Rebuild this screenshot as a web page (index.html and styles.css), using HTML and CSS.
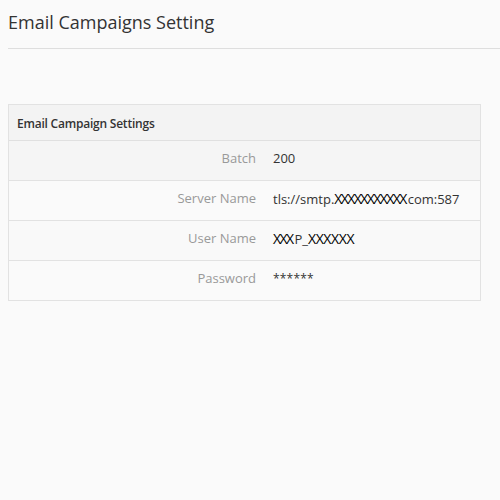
FILE: index.html
```html
<!DOCTYPE html>
<html>
<head>
<meta charset="utf-8">
<link rel="stylesheet" href="styles.css">
</head>
<body>
<div class="page">
  <h1 class="title">Email Campaigns Setting</h1>
  <div class="panel">
    <div class="panel-head">Email Campaign Settings</div>
    <div class="row stripe">
      <div class="label">Batch</div>
      <div class="value">200</div>
    </div>
    <div class="row">
      <div class="label">Server Name</div>
      <div class="value">tls://smtp.<span class="redact">XXXXXXXXXXX</span>com:587</div>
    </div>
    <div class="row stripe2">
      <div class="label">User Name</div>
      <div class="value"><span class="redact">XXX</span>P_<span class="redact wide">XXXXXX</span></div>
    </div>
    <div class="row">
      <div class="label">Password</div>
      <div class="value pw">******</div>
    </div>
  </div>
</div>
</body>
</html>
```

FILE: styles.css
```css
html, body {
  margin: 0;
  padding: 0;
  background: #fafafa;
}
body {
  font-family: "Open Sans", "Liberation Sans", sans-serif;
  color: #333;
}
.page {
  padding: 8px 0 0 8px;
}
.title {
  margin: 0;
  font-size: 18px;
  font-weight: 500;
  line-height: 28px;
  color: #333;
  padding-bottom: 12px;
  border-bottom: 1px solid #dedede;
}
.panel {
  margin-top: 55px;
  width: 471px;
  border: 1px solid #e2e2e2;
  background: #fafafa;
}
.panel-head {
  height: 35px;
  line-height: 37px;
  padding-left: 8px;
  font-size: 12px;
  font-weight: 600;
  letter-spacing: -0.22px;
  color: #333;
  background: #f3f3f3;
  border-bottom: 1px solid #e0e0e0;
}
.row {
  display: grid;
  grid-template-columns: 247px 1fr;
  column-gap: 17px;
  height: 39px;
  box-sizing: content-box;
  align-items: center;
  font-size: 13px;
  border-bottom: 1px solid #e2e2e2;
}
.row > div {
  padding-bottom: 5px;
}
.row:last-child {
  border-bottom: none;
}
.stripe {
  background: #f5f5f5;
}
.stripe2 {
  background: #f9f9f9;
}
.label {
  text-align: right;
  color: #999;
}
.value {
  color: #333;
  white-space: nowrap;
}
.pw {
  font-size: 12px;
  letter-spacing: 0.2px;
}
.redact {
  color: #000;
  letter-spacing: -1.6px;
  font-size: 14px;
  margin-right: 2px;
}
.redact.wide {
  letter-spacing: -0.4px;
}
```
